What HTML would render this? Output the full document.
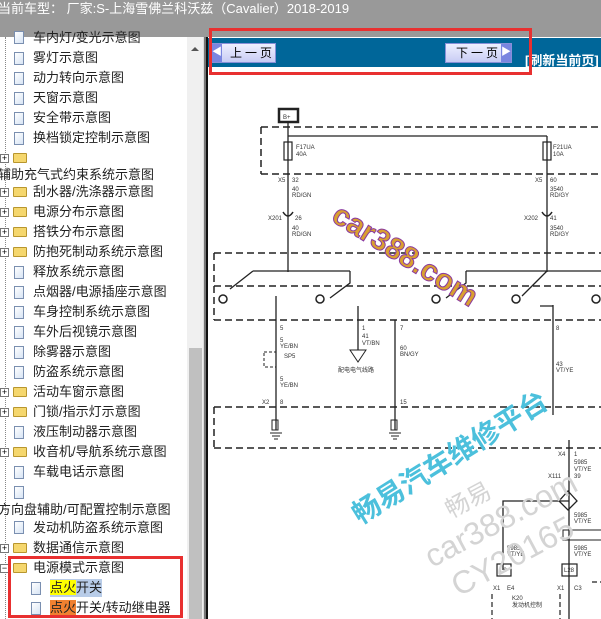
<!DOCTYPE html>
<html><head><meta charset="utf-8"><style>
*{margin:0;padding:0;box-sizing:border-box}
body{width:601px;height:619px;overflow:hidden;background:#fff;position:relative;font-family:"Liberation Sans","Noto Sans CJK SC",sans-serif}
#top{position:absolute;left:0;top:0;width:601px;height:37px;background:#999;color:#fff;font-size:13px;line-height:17px;white-space:nowrap;text-indent:-2px}
.r{position:absolute;height:18px;font-size:13px;line-height:18px;color:#222;white-space:nowrap}
.pg{position:absolute;width:10px;height:13px;border:1px solid #7a8fb0;background:linear-gradient(135deg,#fff,#d8e4f4)}
.fd{position:absolute;width:14px;height:10px;background:#f5d76e;border:1px solid #b8962e;border-radius:1px}
.pl{position:absolute;width:9px;height:9px;border:1px solid #777;background:#fff;font-size:9px;line-height:7px;text-align:center;color:#000}
#sb{position:absolute;left:187px;top:37px;width:17px;height:582px;background:#f0f0f0}
#thumb{position:absolute;left:189px;top:348px;width:13px;height:271px;background:#c0c0c0}
#sep{position:absolute;left:203px;top:37px;width:5px;height:582px;background:linear-gradient(90deg,#ddd 0,#ddd 1px,#777 1px,#777 3px,#111 3px)}
#bar{position:absolute;left:208px;top:38px;width:393px;height:29px;background:#006699}
.btn{position:absolute;top:43px;height:20px;background:linear-gradient(#eef0ff,#c8ccf4);border:1px solid #8890d8;font-size:12px;line-height:18px;color:#000;letter-spacing:3px;white-space:nowrap}
</style></head><body>
<div id="top">当前车型： 厂家:S-上海雪佛兰科沃兹（Cavalier）2018-2019</div>
<div id="sb"></div><div id="thumb"></div>
<div style="position:absolute;left:191px;top:47px;width:0;height:0;border-left:4px solid transparent;border-right:4px solid transparent;border-bottom:4px solid #555"></div>
<div id="sep"></div>
<div id="bar"></div>
<div class="btn" style="left:211px;width:65px;padding-left:18px">上一页</div>
<div style="position:absolute;left:212px;top:44px;width:10px;height:18px;background:#7a86e0;color:#fff;font-size:10px;line-height:18px;text-align:center">◀</div>
<div class="btn" style="left:445px;width:67px;padding-left:10px">下一页</div>
<div style="position:absolute;left:501px;top:44px;width:10px;height:18px;background:#7a86e0;color:#fff;font-size:10px;line-height:18px;text-align:center">▶</div>
<div style="position:absolute;left:525px;top:50px;color:#fff;font-size:13px;font-weight:bold;white-space:nowrap">[刷新当前页]</div>

<svg style="position:absolute;left:208px;top:67px" width="393" height="552" viewBox="208 67 393 552" font-family="Liberation Sans" font-size="6" fill="#333">
<g stroke="#222" stroke-width="1.5" fill="none">
<rect x="279" y="109" width="19" height="13" stroke-width="2.5"/>
<path d="M261 127H601M261 174H601M261 127V174M214 253H601M214 320H601M214 253V320M214 286H601M214 407H601M214 448H601M214 407V448" stroke-dasharray="7 4"/>
<path d="M288 122V272M288 136H547M547 136V272M253 271H350M253 271L230 289M350 271V283L330 298M466 271H601M547 271L522 296M466 271V283L446 298" stroke-width="1.3"/>
<rect x="284" y="142" width="8" height="18" stroke-width="1.2"/><rect x="543" y="142" width="8" height="18" stroke-width="1.2"/>
<path d="M283 212Q288 220 293 212M542 212Q547 220 552 212" />
<circle cx="223" cy="299" r="4"/><circle cx="320" cy="299" r="4"/><circle cx="436" cy="299" r="4"/><circle cx="516" cy="299" r="4"/><circle cx="596" cy="299" r="4"/>
<path d="M276 296V430M358 306V350M395 320V430M553 305V415M540 306H553M569 440V620M569 501H503V570" stroke-width="1.3"/>
<path d="M350 350H366L358 362Z" stroke-width="1"/>
<path d="M568 491L577 501L568 510L559 501Z" stroke-width="1.3"/>
<rect x="264" y="352" width="12" height="15" stroke-dasharray="3 2" stroke-width="1"/>
<rect x="272" y="420" width="6" height="10" stroke-width="1"/><rect x="391" y="420" width="6" height="10" stroke-width="1"/>
<path d="M270 433H282M272 436H280M274 439H278M389 433H401M391 436H399M393 439H397" stroke-width="1"/>
<rect x="563" y="530" width="40" height="10" stroke-width="1"/>
<rect x="497" y="564" width="14" height="12" stroke-width="1.2"/><rect x="562" y="564" width="15" height="12" stroke-width="1.2"/>
<path d="M492 594V619M560 594V619M592 582H601" stroke-dasharray="5 3" stroke-width="1.2"/>
</g>
<text x="283" y="119" font-size="6">B+</text>
<text x="296" y="149">F17UA</text><text x="296" y="156">40A</text>
<text x="553" y="149">F21UA</text><text x="553" y="156">10A</text>
<text x="278" y="182">X5</text><text x="292" y="182">32</text><text x="292" y="191">40</text><text x="292" y="197">RD/GN</text>
<text x="535" y="182">X5</text><text x="550" y="182">60</text><text x="550" y="191">3540</text><text x="550" y="197">RD/GY</text>
<text x="268" y="220">X201</text><text x="295" y="220">26</text><text x="292" y="230">40</text><text x="292" y="236">RD/GN</text>
<text x="524" y="220">X202</text><text x="550" y="220">41</text><text x="550" y="230">3540</text><text x="550" y="236">RD/GY</text>
<text x="280" y="330">5</text><text x="280" y="342">5</text><text x="280" y="348">YE/BN</text><text x="284" y="358">SP5</text>
<text x="280" y="381">5</text><text x="280" y="387">YE/BN</text><text x="262" y="404">X2</text><text x="280" y="404">8</text>
<text x="362" y="330">1</text><text x="362" y="338">41</text><text x="362" y="345">VT/BN</text><text x="338" y="372">配电电气线路</text>
<text x="400" y="330">7</text><text x="400" y="350">60</text><text x="400" y="356">BN/GY</text><text x="400" y="404">15</text>
<text x="556" y="330">8</text><text x="556" y="366">43</text><text x="556" y="372">VT/YE</text>
<text x="558" y="456">X4</text><text x="574" y="456">1</text><text x="574" y="464">5985</text><text x="574" y="471">VT/YE</text>
<text x="548" y="478">X111</text><text x="574" y="478">39</text>
<text x="574" y="517">5985</text><text x="574" y="523">VT/YE</text>
<text x="507" y="550">5985</text><text x="507" y="556">VT/YE</text><text x="574" y="550">5985</text><text x="574" y="556">VT/YE</text>
<text x="500" y="572">L8</text><text x="564" y="572">L28</text>
<text x="493" y="590">X1</text><text x="507" y="590">E4</text><text x="557" y="590">X1</text><text x="574" y="590">C3</text>
<text x="512" y="600">K20</text><text x="512" y="607">发动机控制</text>
<g transform="rotate(-28 480 520)" fill="#d4d4d4" font-size="32"><text x="415" y="540">car388.com</text><text x="425" y="578">CY20165</text><text x="455" y="505" font-size="24" font-family="Noto Sans CJK SC">畅易</text></g>
<text x="330" y="220" font-size="30" font-weight="bold" fill="#d9a030" stroke="#8a3aa0" stroke-width="1" transform="rotate(32 330 220)">car388.com</text>
<text x="360" y="525" font-size="28" font-weight="bold" fill="#4cc0dc" font-family="Noto Sans CJK SC" transform="rotate(-32 360 525)">畅易汽车维修平台</text>
</svg>

<div style="position:absolute;left:5px;top:37px;width:0;height:582px;border-left:1px dotted #888"></div>
<div style="position:absolute;left:0;top:0">
<div class="pg" style="left:14px;top:31px"></div><div class="r" style="left:33px;top:29px">车内灯/变光示意图</div>
<div class="pg" style="left:14px;top:52px"></div><div class="r" style="left:33px;top:49px">雾灯示意图</div>
<div class="pg" style="left:14px;top:72px"></div><div class="r" style="left:33px;top:69px">动力转向示意图</div>
<div class="pg" style="left:14px;top:92px"></div><div class="r" style="left:33px;top:89px">天窗示意图</div>
<div class="pg" style="left:14px;top:112px"></div><div class="r" style="left:33px;top:109px">安全带示意图</div>
<div class="pg" style="left:14px;top:132px"></div><div class="r" style="left:33px;top:129px">换档锁定控制示意图</div>
<div class="pl" style="left:0;top:154px">+</div><div class="fd" style="left:13px;top:153px"></div>
<div class="r" style="left:-2px;top:166px">辅助充气式约束系统示意图</div>
<div class="pl" style="left:0;top:188px">+</div><div class="fd" style="left:13px;top:187px"></div><div class="r" style="left:33px;top:183px">刮水器/洗涤器示意图</div>
<div class="pl" style="left:0;top:208px">+</div><div class="fd" style="left:13px;top:207px"></div><div class="r" style="left:33px;top:203px">电源分布示意图</div>
<div class="pl" style="left:0;top:228px">+</div><div class="fd" style="left:13px;top:227px"></div><div class="r" style="left:33px;top:223px">搭铁分布示意图</div>
<div class="pl" style="left:0;top:248px">+</div><div class="fd" style="left:13px;top:247px"></div><div class="r" style="left:33px;top:243px">防抱死制动系统示意图</div>
<div class="pg" style="left:14px;top:266px"></div><div class="r" style="left:33px;top:263px">释放系统示意图</div>
<div class="pg" style="left:14px;top:286px"></div><div class="r" style="left:33px;top:283px">点烟器/电源插座示意图</div>
<div class="pg" style="left:14px;top:306px"></div><div class="r" style="left:33px;top:303px">车身控制系统示意图</div>
<div class="pg" style="left:14px;top:326px"></div><div class="r" style="left:33px;top:323px">车外后视镜示意图</div>
<div class="pg" style="left:14px;top:346px"></div><div class="r" style="left:33px;top:343px">除雾器示意图</div>
<div class="pg" style="left:14px;top:366px"></div><div class="r" style="left:33px;top:363px">防盗系统示意图</div>
<div class="pl" style="left:0;top:388px">+</div><div class="fd" style="left:13px;top:387px"></div><div class="r" style="left:33px;top:383px">活动车窗示意图</div>
<div class="pl" style="left:0;top:408px">+</div><div class="fd" style="left:13px;top:407px"></div><div class="r" style="left:33px;top:403px">门锁/指示灯示意图</div>
<div class="pg" style="left:14px;top:426px"></div><div class="r" style="left:33px;top:423px">液压制动器示意图</div>
<div class="pl" style="left:0;top:448px">+</div><div class="fd" style="left:13px;top:447px"></div><div class="r" style="left:33px;top:443px">收音机/导航系统示意图</div>
<div class="pg" style="left:14px;top:466px"></div><div class="r" style="left:33px;top:463px">车载电话示意图</div>
<div class="pg" style="left:14px;top:486px"></div>
<div class="r" style="left:-2px;top:501px">方向盘辅助/可配置控制示意图</div>
<div class="pg" style="left:14px;top:521px"></div><div class="r" style="left:33px;top:519px">发动机防盗系统示意图</div>
<div class="pl" style="left:0;top:544px">+</div><div class="fd" style="left:13px;top:543px"></div><div class="r" style="left:33px;top:539px">数据通信示意图</div>
<div class="pl" style="left:0;top:564px">−</div><div class="fd" style="left:13px;top:563px"></div><div class="r" style="left:33px;top:559px">电源模式示意图</div>
<div class="pg" style="left:31px;top:582px"></div><div class="r" style="left:50px;top:579px;background:#b8cce8"><span style="background:#ff0">点火</span>开关</div>
<div class="pg" style="left:31px;top:602px"></div><div class="r" style="left:50px;top:599px"><span style="background:#f08030">点火</span>开关/转动继电器</div>
</div>
<div style="position:absolute;left:8px;top:556px;width:175px;height:62px;border:3px solid #e83030"></div>
<div style="position:absolute;left:209px;top:28px;width:323px;height:47px;border:3px solid #e83030"></div>
</body></html>
